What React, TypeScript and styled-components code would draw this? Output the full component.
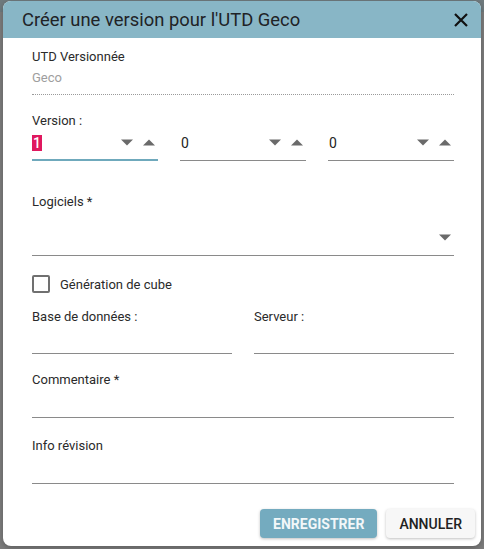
import React from 'react';
import styled, { createGlobalStyle } from 'styled-components';

const GlobalStyle = createGlobalStyle`
  html, body {
    margin: 0;
    padding: 0;
    background: #7d7d7d;
    font-family: Roboto, "Liberation Sans", sans-serif;
  }
`;

const Backdrop = styled.div`
  width: 484px;
  height: 549px;
  box-sizing: border-box;
  padding: 1px 3px 3px 3px;
  background: linear-gradient(to bottom, #6f7a7e 0, #6f7a7e 12px, #7d7d7d 12px);
`;

const Dialog = styled.div`
  height: 545px;
  background: #fff;
  border-radius: 8px;
  overflow: hidden;
  display: flex;
  flex-direction: column;
  box-shadow: 0 2px 6px rgba(0, 0, 0, 0.25);
`;

const Header = styled.div`
  height: 37px;
  flex: none;
  background: #88b6c6;
  display: flex;
  align-items: center;
  justify-content: space-between;
  padding: 0 10px 0 19px;
`;

const Title = styled.h2`
  margin: 0;
  font-size: 18.4px;
  font-weight: 400;
  color: #1f2326;
`;

const CloseButton = styled.button`
  border: none;
  background: none;
  padding: 0;
  width: 20px;
  height: 20px;
  display: flex;
  align-items: center;
  justify-content: center;
  cursor: pointer;
`;

const Body = styled.div`
  flex: 1;
  padding: 11px 27px 0 29px;
  display: flex;
  flex-direction: column;
`;

const Label = styled.div<{ $mt?: number }>`
  font-size: 13px;
  color: #2a2a2a;
  line-height: 16px;
  margin-top: ${(p) => p.$mt ?? 0}px;
`;

const ReadOnlyValue = styled.div`
  font-size: 13px;
  color: #9e9e9e;
  line-height: 16px;
  margin-top: 5px;
  padding-bottom: 8px;
  border-bottom: 1px dotted #9a9a9a;
`;

const Row = styled.div<{ $gap: number; $mt?: number }>`
  display: grid;
  grid-template-columns: repeat(auto-fit, minmax(0, 1fr));
  column-gap: ${(p) => p.$gap}px;
  margin-top: ${(p) => p.$mt ?? 0}px;
`;

const NumberField = styled.div<{ $focused?: boolean }>`
  height: 27px;
  display: flex;
  align-items: center;
  border-bottom: ${(p) => (p.$focused ? '2px solid #6fa9bc' : '1px solid #8a8a8a')};
  padding-bottom: ${(p) => (p.$focused ? 3 : 4)}px;
  font-size: 14px;
  color: #222;
`;

const Value = styled.span<{ $selected?: boolean }>`
  flex: 1;
  line-height: 18px;
  span {
    background: ${(p) => (p.$selected ? '#e0185f' : 'transparent')};
    color: ${(p) => (p.$selected ? '#fff' : '#222')};
    padding: 0 1px;
    font-weight: ${(p) => (p.$selected ? 500 : 400)};
  }
`;

const Spinners = styled.div`
  display: flex;
  gap: 10px;
  margin-right: 3px;
`;

const TextLine = styled.div<{ $h: number }>`
  height: ${(p) => p.$h}px;
  box-sizing: border-box;
  border-bottom: 1px solid #8a8a8a;
  display: flex;
  align-items: flex-end;
  justify-content: flex-end;
  padding: 0 3px 14px 0;
`;

const CheckRow = styled.label`
  display: flex;
  align-items: center;
  gap: 10px;
  height: 18px;
  margin-top: 19px;
  font-size: 13px;
  color: #2a2a2a;
`;

const Box = styled.span`
  width: 18px;
  height: 18px;
  box-sizing: border-box;
  border: 2px solid #707070;
  border-radius: 2px;
  display: inline-block;
`;

const Footer = styled.div`
  margin-top: auto;
  display: flex;
  justify-content: flex-end;
  gap: 9px;
  padding: 0 6px 8px 0;
`;

const Button = styled.button<{ $primary?: boolean }>`
  height: 29px;
  border: none;
  border-radius: 4px;
  padding: 0 13px;
  font-family: Roboto, "Liberation Sans", sans-serif;
  font-size: 14px;
  text-transform: uppercase;
  background: ${(p) => (p.$primary ? '#74abbf' : '#f7f7f7')};
  color: ${(p) => (p.$primary ? '#f2f7f9' : '#222')};
  font-weight: ${(p) => (p.$primary ? 700 : 500)};
  box-shadow: 0 1px 3px rgba(0, 0, 0, 0.25);
  cursor: pointer;
`;

const Triangle = ({ up }: { up?: boolean }) => (
  <svg width="12" height="7" viewBox="0 0 12 7">
    <path d={up ? 'M0 6.5 L6 0.5 L12 6.5 Z' : 'M0 0.5 L12 0.5 L6 6.5 Z'} fill="#6a6a6a" />
  </svg>
);

const Spin = () => (
  <Spinners>
    <Triangle />
    <Triangle up />
  </Spinners>
);

const App = () => {
  return (
    <>
      <GlobalStyle />
      <Backdrop>
        <Dialog>
          <Header>
            <Title>Créer une version pour l'UTD Geco</Title>
            <CloseButton aria-label="Fermer">
              <svg width="14" height="14" viewBox="0 0 14 14">
                <path d="M1 1 L13 13 M13 1 L1 13" stroke="#111" strokeWidth="2.2" />
              </svg>
            </CloseButton>
          </Header>
          <Body>
            <Label>UTD Versionnée</Label>
            <ReadOnlyValue>Geco</ReadOnlyValue>

            <Label $mt={18}>Version :</Label>
            <Row $gap={22}>
              <NumberField $focused>
                <Value $selected>
                  <span>1</span>
                </Value>
                <Spin />
              </NumberField>
              <NumberField>
                <Value>
                  <span>0</span>
                </Value>
                <Spin />
              </NumberField>
              <NumberField>
                <Value>
                  <span>0</span>
                </Value>
                <Spin />
              </NumberField>
            </Row>

            <Label $mt={33}>Logiciels *</Label>
            <TextLine $h={46}>
              <Triangle />
            </TextLine>

            <CheckRow>
              <Box />
              Génération de cube
            </CheckRow>

            <Row $gap={22} $mt={16}>
              <div>
                <Label>Base de données :</Label>
                <TextLine $h={29} />
              </div>
              <div>
                <Label>Serveur :</Label>
                <TextLine $h={29} />
              </div>
            </Row>

            <Label $mt={18}>Commentaire *</Label>
            <TextLine $h={30} />

            <Label $mt={20}>Info révision</Label>
            <TextLine $h={30} />
          </Body>
          <Footer>
            <Button $primary>Enregistrer</Button>
            <Button>Annuler</Button>
          </Footer>
        </Dialog>
      </Backdrop>
    </>
  );
};

export default App;
